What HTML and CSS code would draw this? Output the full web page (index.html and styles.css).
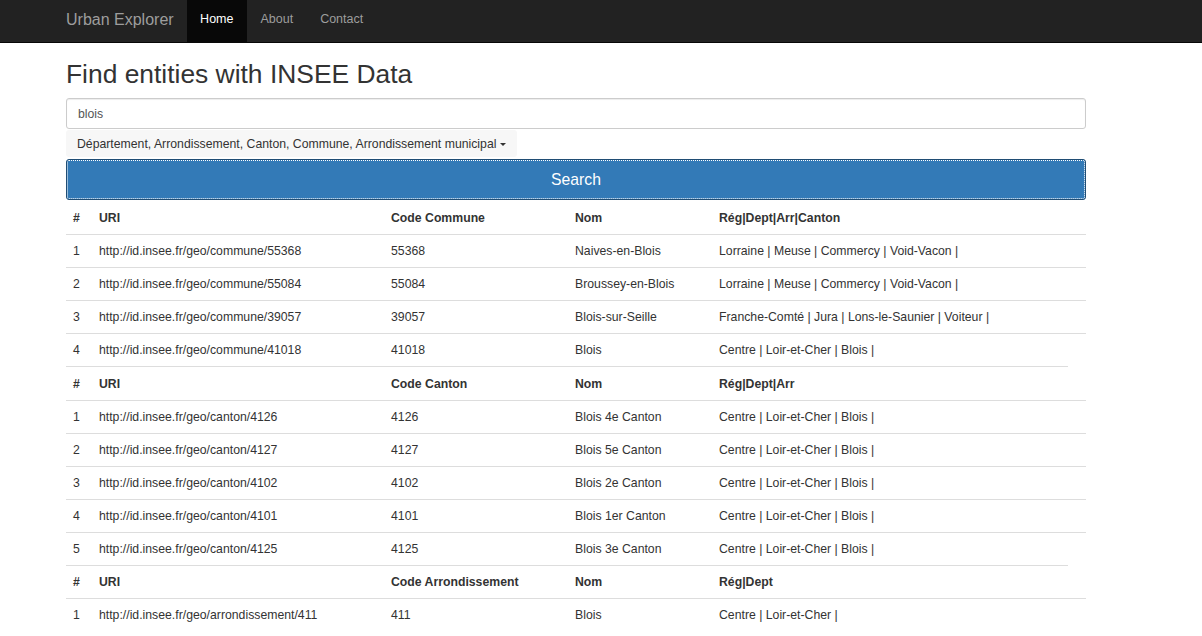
FILE: index.html
```html
<!DOCTYPE html>
<html lang="fr">
<head>
<meta charset="utf-8">
<title>Urban Explorer</title>
<link rel="stylesheet" href="styles.css">
</head>
<body>
<nav class="navbar">
  <div class="nav-inner">
    <a class="brand" href="#">Urban Explorer</a>
    <ul class="nav-links">
      <li><a class="active" href="#">Home</a></li>
      <li><a href="#">About</a></li>
      <li><a href="#">Contact</a></li>
    </ul>
  </div>
</nav>
<main class="container">
  <h1 class="title">Find entities with INSEE Data</h1>
  <input class="search-input" type="text" value="blois">
  <div class="select-row">
    <button class="select-btn" type="button">Département, Arrondissement, Canton, Commune, Arrondissement municipal <span class="caret"></span></button>
  </div>
  <button class="search-btn" type="button">Search</button>
  <table class="results">
    <colgroup>
      <col class="c-num"><col class="c-uri"><col class="c-code"><col class="c-nom"><col class="c-hier"><col class="c-extra">
    </colgroup>
    <tbody>
      <tr class="head first"><th>#</th><th>URI</th><th>Code Commune</th><th>Nom</th><th>Rég|Dept|Arr|Canton</th></tr>
      <tr><td>1</td><td>http://id.insee.fr/geo/commune/55368</td><td>55368</td><td>Naives-en-Blois</td><td>Lorraine | Meuse | Commercy | Void-Vacon |</td><td></td></tr>
      <tr><td>2</td><td>http://id.insee.fr/geo/commune/55084</td><td>55084</td><td>Broussey-en-Blois</td><td>Lorraine | Meuse | Commercy | Void-Vacon |</td><td></td></tr>
      <tr><td>3</td><td>http://id.insee.fr/geo/commune/39057</td><td>39057</td><td>Blois-sur-Seille</td><td>Franche-Comté | Jura | Lons-le-Saunier | Voiteur |</td><td></td></tr>
      <tr><td>4</td><td>http://id.insee.fr/geo/commune/41018</td><td>41018</td><td>Blois</td><td>Centre | Loir-et-Cher | Blois |</td><td></td></tr>
      <tr class="head"><th>#</th><th>URI</th><th>Code Canton</th><th>Nom</th><th>Rég|Dept|Arr</th></tr>
      <tr><td>1</td><td>http://id.insee.fr/geo/canton/4126</td><td>4126</td><td>Blois 4e Canton</td><td>Centre | Loir-et-Cher | Blois |</td><td></td></tr>
      <tr><td>2</td><td>http://id.insee.fr/geo/canton/4127</td><td>4127</td><td>Blois 5e Canton</td><td>Centre | Loir-et-Cher | Blois |</td><td></td></tr>
      <tr><td>3</td><td>http://id.insee.fr/geo/canton/4102</td><td>4102</td><td>Blois 2e Canton</td><td>Centre | Loir-et-Cher | Blois |</td><td></td></tr>
      <tr><td>4</td><td>http://id.insee.fr/geo/canton/4101</td><td>4101</td><td>Blois 1er Canton</td><td>Centre | Loir-et-Cher | Blois |</td><td></td></tr>
      <tr><td>5</td><td>http://id.insee.fr/geo/canton/4125</td><td>4125</td><td>Blois 3e Canton</td><td>Centre | Loir-et-Cher | Blois |</td><td></td></tr>
      <tr class="head"><th>#</th><th>URI</th><th>Code Arrondissement</th><th>Nom</th><th>Rég|Dept</th></tr>
      <tr><td>1</td><td>http://id.insee.fr/geo/arrondissement/411</td><td>411</td><td>Blois</td><td>Centre | Loir-et-Cher |</td><td></td></tr>
    </tbody>
  </table>
</main>
</body>
</html>
```
FILE: styles.css
```css
html, body {
  margin: 0;
  padding: 0;
  background: #fff;
}
body {
  font-family: "Liberation Sans", Arial, Helvetica, sans-serif;
  font-size: 12.25px;
  color: #333;
  overflow: hidden;
}
.navbar {
  background: #222;
  border-bottom: 1px solid #080808;
  height: 42px;
}
.nav-inner {
  display: flex;
  align-items: stretch;
  height: 42px;
  padding-left: 66px;
}
.brand {
  display: flex;
  align-items: center;
  font-size: 16px;
  color: #9d9d9d;
  text-decoration: none;
  padding-right: 13px;
  padding-bottom: 3px;
}
.nav-links {
  display: flex;
  list-style: none;
  margin: 0;
  padding: 0;
}
.nav-links li {
  display: flex;
}
.nav-links a {
  display: flex;
  align-items: center;
  padding: 0 13.5px 4px;
  color: #9d9d9d;
  text-decoration: none;
  font-size: 12.5px;
}
.nav-links a.active {
  background: #080808;
  color: #fff;
}
.container {
  width: 1020px;
  margin-left: 66px;
}
.title {
  font-size: 26.4px;
  font-weight: 500;
  line-height: 1.1;
  margin: 16.5px 0 9.5px;
  color: #333;
}
.search-input {
  display: block;
  box-sizing: border-box;
  width: 100%;
  height: 31px;
  margin: 0;
  padding: 0 11px;
  border: 1px solid #ccc;
  border-radius: 3px;
  box-shadow: inset 0 1px 1px rgba(0,0,0,.075);
  font-family: inherit;
  font-size: 12.25px;
  color: #555;
  outline: none;
}
.select-row {
  margin-top: 1px;
}
.select-btn {
  display: inline-flex;
  align-items: center;
  gap: 4px;
  height: 27px;
  padding: 1px 11px 0;
  margin: 0;
  border: 0;
  border-radius: 3px;
  background: #f7f7f7;
  font-family: inherit;
  font-size: 12.25px;
  color: #333;
}
.caret {
  display: inline-block;
  width: 0;
  height: 0;
  border-top: 3.5px solid #333;
  border-left: 3.5px solid transparent;
  border-right: 3.5px solid transparent;
}
.search-btn {
  display: block;
  box-sizing: border-box;
  width: 100%;
  height: 41px;
  margin: 2px 0 0;
  padding: 1px 0 0;
  background: #337ab7;
  border: 1px solid #204d74;
  border-radius: 3px;
  outline: 1px dotted #fff;
  outline-offset: -2px;
  color: #fff;
  font-family: inherit;
  font-size: 15.75px;
}
.results {
  width: 100%;
  table-layout: fixed;
  border-collapse: collapse;
  border-spacing: 0;
}
.c-num { width: 26px; }
.c-uri { width: 292px; }
.c-code { width: 184px; }
.c-nom { width: 144px; }
.c-hier { width: 356px; }
.c-extra { width: 18px; }
.results th,
.results td {
  padding: 7px;
  line-height: 18.08px;
  text-align: left;
  vertical-align: top;
  border-top: 1px solid #ddd;
  white-space: nowrap;
  overflow: hidden;
}
.results th {
  font-weight: bold;
}
.results tr.head th {
  padding-top: 7.5px;
  padding-bottom: 6.5px;
}
.results tr.first th {
  border-top: 0;
  padding-top: 9px;
  padding-bottom: 7px;
}
```
